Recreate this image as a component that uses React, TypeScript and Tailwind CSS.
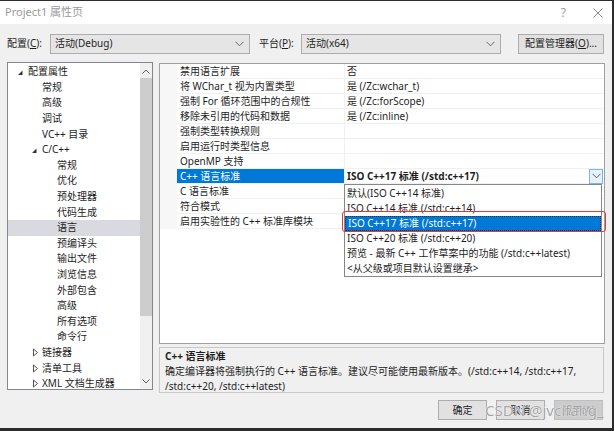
const font = { fontFamily: '"Noto Sans", "Noto Sans CJK SC", sans-serif' };

type TreeItem = { label: string; lvl: 0 | 1 | 2; arrow?: "open" | "closed"; selected?: boolean };

const treeItems: TreeItem[] = [
  { label: "配置属性", lvl: 0, arrow: "open" },
  { label: "常规", lvl: 1 },
  { label: "高级", lvl: 1 },
  { label: "调试", lvl: 1 },
  { label: "VC++ 目录", lvl: 1 },
  { label: "C/C++", lvl: 1, arrow: "open" },
  { label: "常规", lvl: 2 },
  { label: "优化", lvl: 2 },
  { label: "预处理器", lvl: 2 },
  { label: "代码生成", lvl: 2 },
  { label: "语言", lvl: 2, selected: true },
  { label: "预编译头", lvl: 2 },
  { label: "输出文件", lvl: 2 },
  { label: "浏览信息", lvl: 2 },
  { label: "外部包含", lvl: 2 },
  { label: "高级", lvl: 2 },
  { label: "所有选项", lvl: 2 },
  { label: "命令行", lvl: 2 },
  { label: "链接器", lvl: 1, arrow: "closed" },
  { label: "清单工具", lvl: 1, arrow: "closed" },
  { label: "XML 文档生成器", lvl: 1, arrow: "closed" },
];

const levelPad = ["pl-[9px]", "pl-[23px]", "pl-[38px]"];

const gridRows = [
  { name: "禁用语言扩展", value: "否" },
  { name: "将 WChar_t 视为内置类型", value: "是 (/Zc:wchar_t)" },
  { name: "强制 For 循环范围中的合规性", value: "是 (/Zc:forScope)" },
  { name: "移除未引用的代码和数据", value: "是 (/Zc:inline)" },
  { name: "强制类型转换规则", value: "" },
  { name: "启用运行时类型信息", value: "" },
  { name: "OpenMP 支持", value: "" },
  { name: "C++ 语言标准", value: "ISO C++17 标准 (/std:c++17)", selected: true },
  { name: "C 语言标准", value: "" },
  { name: "符合模式", value: "" },
  { name: "启用实验性的 C++ 标准库模块", value: "" },
];

const options = [
  "默认(ISO C++14 标准)",
  "ISO C++14 标准 (/std:c++14)",
  "ISO C++17 标准 (/std:c++17)",
  "ISO C++20 标准 (/std:c++20)",
  "预览 - 最新 C++ 工作草案中的功能 (/std:c++latest)",
  "<从父级或项目默认设置继承>",
];

function Chevron({ className = "" }: { className?: string }) {
  return (
    <svg width="9" height="6" viewBox="0 0 9 6" className={className}>
      <path d="M0.5 0.8 L4.5 4.8 L8.5 0.8" fill="none" stroke="#666" strokeWidth="1" />
    </svg>
  );
}

function Combo({ text, width }: { text: string; width: string }) {
  return (
    <div className={`flex h-[20px] ${width} items-center justify-between border border-[#adadad] bg-[#e5e5e5] pl-[4px] pr-[5px]`}>
      <span>{text}</span>
      <Chevron />
    </div>
  );
}

function TreeArrow({ kind }: { kind?: "open" | "closed" }) {
  if (kind === "open")
    return (
      <svg width="11" height="8" viewBox="0 0 11 8">
        <path d="M1 7 L5.5 7 L5.5 2.5 Z" fill="#333" />
      </svg>
    );
  if (kind === "closed")
    return (
      <svg width="11" height="9" viewBox="0 0 11 9">
        <path d="M2.5 1 L6.5 4.5 L2.5 8 Z" fill="none" stroke="#555" strokeWidth="1" />
      </svg>
    );
  return <span className="w-[11px]" />;
}

function Tree() {
  return (
    <div className="flex h-[328px] w-[146px] border border-[#828790] bg-white">
      <div className="flex flex-1 flex-col overflow-hidden pt-px">
        {treeItems.map((item, i) => (
          <div
            key={i}
            className={`flex h-[15.6px] shrink-0 items-center ${levelPad[item.lvl]} ${item.selected ? "bg-[#d9d9e0]" : ""}`}
          >
            {item.lvl < 2 && <TreeArrow kind={item.arrow} />}
            {item.lvl === 2 && <span className="w-[11px]" />}
            <span className="whitespace-nowrap">{item.label}</span>
          </div>
        ))}
      </div>
      <div className="flex w-[12px] flex-col items-center bg-[#f0f0f0]">
        <svg width="8" height="5" viewBox="0 0 8 5" className="mt-[6px]">
          <path d="M0.5 4.5 L4 1 L7.5 4.5" fill="none" stroke="#606060" />
        </svg>
        <div className="mt-[4px] h-[238px] w-full bg-[#cdcdcd]" />
        <div className="flex-1" />
        <svg width="8" height="5" viewBox="0 0 8 5" className="mb-[5px]">
          <path d="M0.5 0.5 L4 4 L7.5 0.5" fill="none" stroke="#606060" />
        </svg>
      </div>
    </div>
  );
}

function Grid() {
  return (
    <div className="flex h-[281px] w-[446px] flex-col border border-[#a0a0a0] bg-white">
      {gridRows.map((row, i) => (
        <div key={i} className="flex h-[15px] shrink-0 leading-[14px]">
          <div className="w-[17px] bg-[#f7f7f7]" />
          <div
            className={`w-[167px] truncate border-b border-[#f0f0f0] pl-[3px] ${row.selected ? "bg-[#0078d7] text-white" : ""}`}
          >
            {row.name}
          </div>
          <div className="w-px bg-[#f0f0f0]" />
          <div
            className={`flex flex-1 items-center justify-between border-b border-[#f0f0f0] pl-[2px] ${row.selected ? "font-bold" : ""}`}
          >
            <span className="whitespace-nowrap">{row.value}</span>
            {row.selected && (
              <div className="mr-[1px] flex h-[15px] w-[14px] items-center justify-center border border-[#7eb4ea] bg-[#e5f1fb]">
                <Chevron />
              </div>
            )}
          </div>
        </div>
      ))}
    </div>
  );
}

function Button({ label, disabled }: { label: string; disabled?: boolean }) {
  return (
    <div
      className={`flex h-[20px] w-[49px] items-center justify-center border ${
        disabled ? "border-[#bfbfbf] bg-[#cccccc] text-[#a0a0a0]" : "border-[#adadad] bg-[#e1e1e1]"
      }`}
    >
      {label}
    </div>
  );
}

export default function App() {
  return (
    <div
      style={font}
      className="relative flex h-[431px] w-[614px] flex-col overflow-hidden border-t border-r-2 border-b-[3px] border-[#2b2b2b] bg-[#f0f0f0] text-[10px] text-[#1e1e1e]"
    >
      <div className="flex h-[23px] shrink-0 items-center bg-white pl-[5px] pr-[9px] text-[11px] text-[#9a9a9a]">
        <span>Project1 属性页</span>
        <span className="ml-auto mr-[27px] text-[12px]">?</span>
        <svg width="10" height="10" viewBox="0 0 10 10">
          <path d="M0.5 0.5 L9.5 9.5 M9.5 0.5 L0.5 9.5" stroke="#8a8a8a" strokeWidth="1" />
        </svg>
      </div>

      <div className="flex h-[38px] shrink-0 items-center pl-[7px] pt-[1px]">
        <span className="w-[43px]">
          配置(<span className="underline">C</span>):
        </span>
        <Combo text="活动(Debug)" width="w-[200px]" />
        <span className="ml-[9px] w-[42px]">
          平台(<span className="underline">P</span>):
        </span>
        <Combo text="活动(x64)" width="w-[200px]" />
        <div className="ml-[17px] flex h-[20px] w-[86px] items-center justify-center whitespace-nowrap border border-[#adadad] bg-[#e1e1e1]">
          配置管理器(<span className="underline">O</span>)...
        </div>
      </div>

      <div className="relative flex shrink-0 gap-[6px] pl-[7px]">
        <Tree />
        <div className="flex flex-col gap-[3px] pt-px">
          <Grid />
          <div className="h-[46px] w-[445px] border border-[#c8c8c8] px-[5px] pt-px leading-[15px]">
            <div className="font-bold">C++ 语言标准</div>
            <div className="whitespace-nowrap">确定编译器将强制执行的 C++ 语言标准。建议尽可能使用最新版本。(/std:c++14, /std:c++17,</div>
            <div>/std:c++20, /std:c++latest)</div>
          </div>
        </div>

        <div className="absolute left-[344px] top-[122px] flex h-[93px] w-[258px] flex-col border border-[#828790] bg-white pt-px leading-[15px]">
          {options.map((o, i) => (
            <div
              key={i}
              className={`h-[15px] whitespace-nowrap pl-[2px] ${i === 2 ? "border border-dotted border-[#333] bg-[#0078d7] pl-[1px] leading-[13px] text-white" : ""}`}
            >
              {o}
            </div>
          ))}
        </div>
        <div className="absolute left-[342px] top-[149px] h-[21px] w-[264px] rounded-[3px] border border-[#e0393e]" />
      </div>

      <div className="flex shrink-0 justify-end gap-[9px] pr-[9px] pt-[7px]">
        <Button label="确定" />
        <Button label="取消" />
        <Button label="应用(A)" disabled />
      </div>

      <div className="absolute left-[485px] top-[400px] text-[15px] leading-[18px] text-[#8c8c8c]/80 [text-shadow:0_0_1px_#fff,0_0_1px_#fff]">
        CSDN @jvcifang_
      </div>
    </div>
  );
}
